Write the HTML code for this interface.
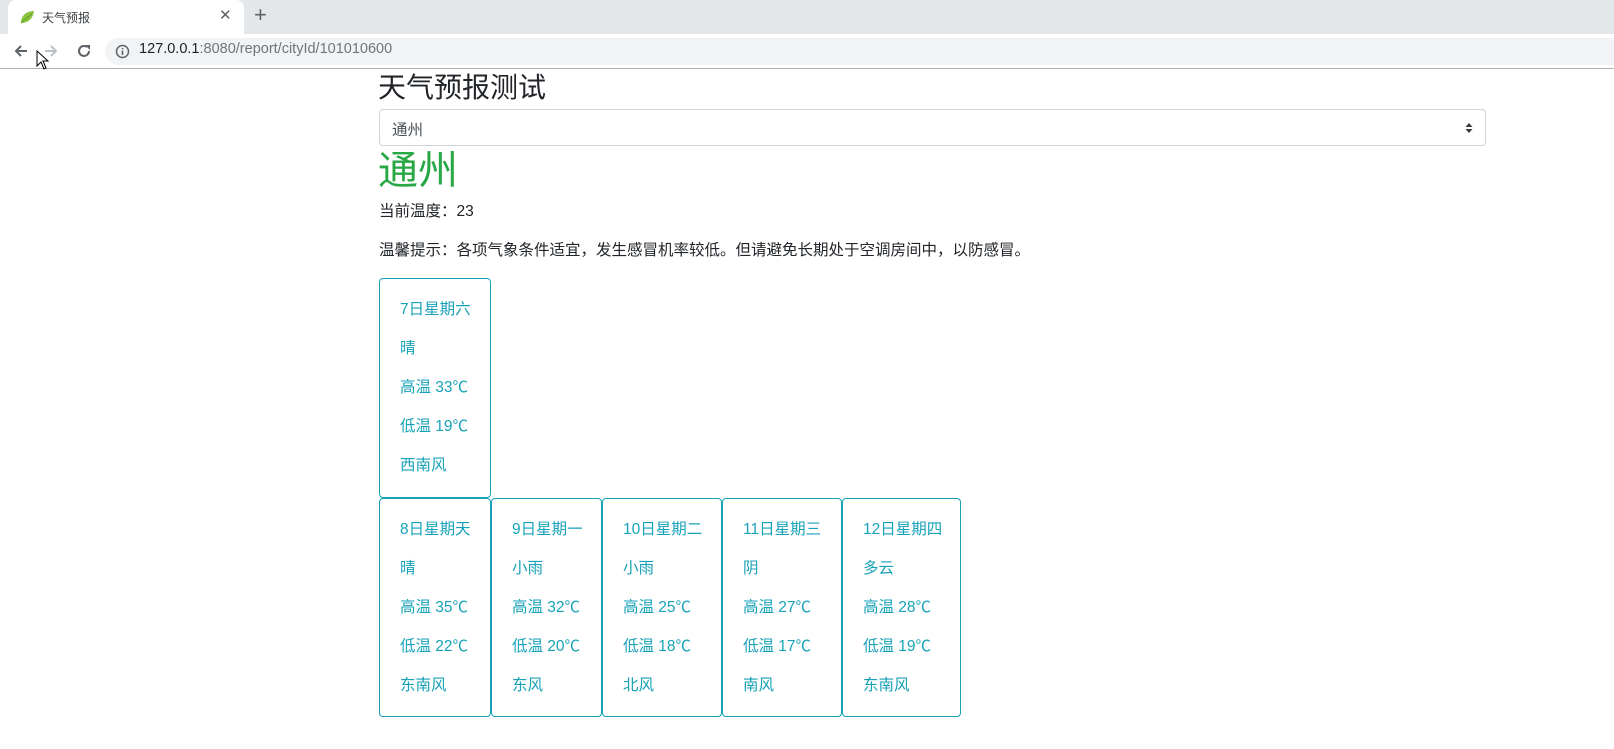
<!DOCTYPE html>
<html><head><meta charset="utf-8"><style>
*{margin:0;padding:0;box-sizing:border-box}
body{width:1614px;height:749px;overflow:hidden;background:#fff;font-family:"Liberation Sans","Noto Sans CJK SC",sans-serif;position:relative;color:#212529}
.abs{position:absolute}
.card{position:absolute;border:1px solid #17a2b8;border-radius:4px;color:#17a2b8;font-size:15.5px}
.card div{position:absolute;left:20px;white-space:nowrap;line-height:20px}
</style></head><body>
<div class="abs" style="left:0;top:0;width:1614px;height:34px;background:#e4e7ea"></div>
<div class="abs" style="left:8px;top:0;width:236px;height:34px;background:#fff;border-radius:8px 8px 0 0"></div>
<svg class="abs" style="left:19px;top:9px" width="16" height="16" viewBox="0 0 16 16"><path d="M2 14 C2 6 8 2 15 2 C14 10 9 14 2 14Z" fill="#8cc43f"/><path d="M2 14 C6 10 9 8 13 5" stroke="#5a9a2a" stroke-width="1" fill="none"/></svg>
<div class="abs" style="left:42px;top:9px;font-size:12px;color:#3c4043">天气预报</div>
<div class="abs" style="left:219px;top:6px;font-size:15px;color:#5f6368">✕</div>
<div class="abs" style="left:254px;top:2px;font-size:22px;color:#5f6368">+</div>
<div class="abs" style="left:0;top:34px;width:1614px;height:35px;background:#fff"></div>
<div class="abs" style="left:0;top:68px;width:1614px;height:1px;background:#b0b0b0"></div>
<svg class="abs" style="left:12px;top:42px" width="18" height="18" viewBox="0 0 18 18"><path d="M15 9H4M9 4L4 9L9 14" stroke="#5f6368" stroke-width="2" fill="none"/></svg>
<svg class="abs" style="left:42px;top:42px" width="18" height="18" viewBox="0 0 18 18"><path d="M3 9H14M9 4L14 9L9 14" stroke="#bdc1c6" stroke-width="2" fill="none"/></svg>
<svg class="abs" style="left:75px;top:42px" width="18" height="18" viewBox="0 0 18 18"><path d="M14 9A5 5 0 1 1 12 5" stroke="#5f6368" stroke-width="2" fill="none"/><path d="M10 3H15V8Z" fill="#5f6368"/></svg>
<svg class="abs" style="left:36px;top:50px" width="14" height="20" viewBox="0 0 14 20"><path d="M1 1V16L5 12L8 19L10 18L7 11H12Z" fill="#fff" stroke="#000" stroke-width="1"/></svg>
<div class="abs" style="left:105px;top:38px;width:1509px;height:27px;background:#f1f3f4;border-radius:14px 0 0 14px"></div>
<svg class="abs" style="left:115px;top:44px" width="15" height="15" viewBox="0 0 15 15"><circle cx="7.5" cy="7.5" r="6" stroke="#5f6368" stroke-width="1.5" fill="none"/><path d="M7.5 6.5V11M7.5 4V5.2" stroke="#5f6368" stroke-width="1.6"/></svg>
<div class="abs" style="left:139px;top:41px;font-size:14.5px;color:#202124">127.0.0.1<span style="color:#70757a">:8080/report/cityId/101010600</span></div>

<div class="abs" style="left:378px;top:70px;font-size:28px;line-height:36px">天气预报测试</div>
<div class="abs" style="left:379px;top:109px;width:1107px;height:37px;border:1px solid #ced4da;border-radius:4px"></div>
<div class="abs" style="left:392px;top:118px;font-size:15.5px;color:#495057">通州</div>
<svg class="abs" style="left:1465px;top:122px" width="8" height="12" viewBox="0 0 8 12"><path d="M4 1L7.5 5H0.5ZM4 11L7.5 7H0.5Z" fill="#343a40"/></svg>
<div class="abs" style="left:378px;top:146px;font-size:40px;line-height:50px;color:#28a745">通州</div>
<div class="abs" style="left:379px;top:202px;font-size:15.5px;line-height:20px">当前温度：23</div>
<div class="abs" style="left:379px;top:241px;font-size:15.5px;line-height:20px">温馨提示：各项气象条件适宜，发生感冒机率较低。但请避免长期处于空调房间中，以防感冒。</div>

<div class="card" style="left:379px;top:278px;width:112px;height:220px"><div style="top:21px">7日星期六</div><div style="top:60px">晴</div><div style="top:99px">高温 33℃</div><div style="top:138px">低温 19℃</div><div style="top:177px">西南风</div></div>
<div class="card" style="left:379px;top:498px;width:112px;height:219px"><div style="top:21px">8日星期天</div><div style="top:60px">晴</div><div style="top:99px">高温 35℃</div><div style="top:138px">低温 22℃</div><div style="top:177px">东南风</div></div>
<div class="card" style="left:491px;top:498px;width:111px;height:219px"><div style="top:21px">9日星期一</div><div style="top:60px">小雨</div><div style="top:99px">高温 32℃</div><div style="top:138px">低温 20℃</div><div style="top:177px">东风</div></div>
<div class="card" style="left:602px;top:498px;width:120px;height:219px"><div style="top:21px">10日星期二</div><div style="top:60px">小雨</div><div style="top:99px">高温 25℃</div><div style="top:138px">低温 18℃</div><div style="top:177px">北风</div></div>
<div class="card" style="left:722px;top:498px;width:120px;height:219px"><div style="top:21px">11日星期三</div><div style="top:60px">阴</div><div style="top:99px">高温 27℃</div><div style="top:138px">低温 17℃</div><div style="top:177px">南风</div></div>
<div class="card" style="left:842px;top:498px;width:119px;height:219px"><div style="top:21px">12日星期四</div><div style="top:60px">多云</div><div style="top:99px">高温 28℃</div><div style="top:138px">低温 19℃</div><div style="top:177px">东南风</div></div>
</body></html>
